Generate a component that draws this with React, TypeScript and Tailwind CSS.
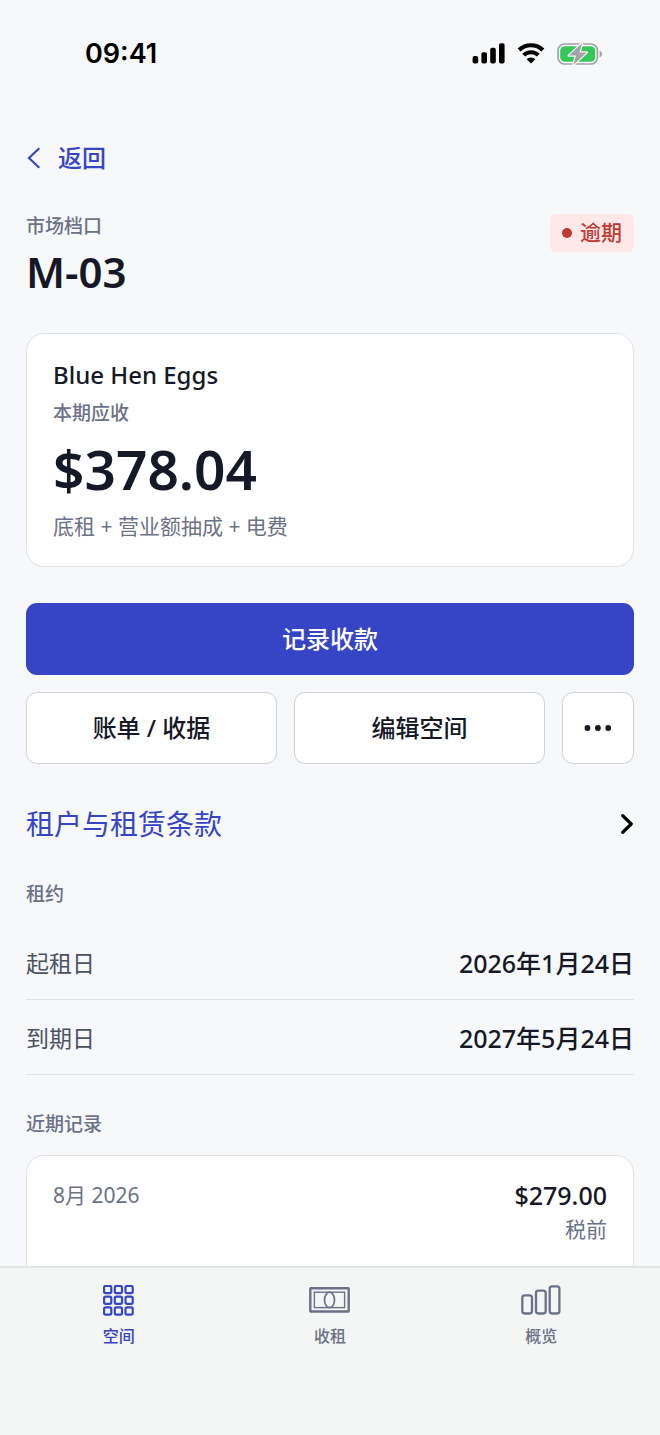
import type { ReactNode } from "react";

function SignalIcon() {
  return (
    <svg width="33" height="21" viewBox="0 0 33 21" fill="#000" aria-hidden="true">
      <rect x="0.6" y="13" width="5.6" height="7.5" rx="1.9" />
      <rect x="9.4" y="9.3" width="5.6" height="11.2" rx="1.9" />
      <rect x="18.2" y="4.8" width="5.6" height="15.7" rx="1.9" />
      <rect x="27" y="0.2" width="5.6" height="20.3" rx="1.9" />
    </svg>
  );
}

function WifiIcon() {
  return (
    <svg width="28" height="21" viewBox="0 0 28 21" fill="none" stroke="#000" aria-hidden="true">
      <path d="M2.1 7.1a17 17 0 0 1 23.8 0" strokeWidth="4.2" />
      <path d="M6.7 12.2a10.4 10.4 0 0 1 14.6 0" strokeWidth="4" />
      <path d="M14 20.5 9.7 16.3a6 6 0 0 1 8.6 0Z" fill="#000" stroke="none" />
    </svg>
  );
}

function BatteryIcon() {
  return (
    <svg width="46" height="22" viewBox="0 0 46 22" fill="none" aria-hidden="true">
      <rect x="1" y="1" width="39.4" height="20" rx="6.6" stroke="#a3a2a7" strokeWidth="1.7" />
      <rect x="3.2" y="3.2" width="35" height="15.6" rx="4.6" fill="#34c759" />
      <path d="M42.6 7.7c1.6.7 2.5 1.9 2.5 3.3s-.9 2.6-2.5 3.3Z" fill="#a3a2a7" />
      <path
        d="M25.2 0 11.8 12.6h7.2L16.2 22 29.8 9.4H22.5Z"
        fill="#a3a2a7"
        stroke="#f6f8fa"
        strokeWidth="2.4"
        strokeLinejoin="round"
        paintOrder="stroke"
      />
    </svg>
  );
}

function GridIcon() {
  const cells = [1, 11.7, 22.4];
  return (
    <svg width="31" height="31" viewBox="0 0 31 31" fill="none" stroke="currentColor" strokeWidth="2.2" aria-hidden="true">
      {cells.map((y) => cells.map((x) => <rect key={`${x}-${y}`} x={x + 0.1} y={y} width="7.2" height="7.2" rx="1.6" />))}
    </svg>
  );
}

function BanknoteIcon() {
  return (
    <svg width="41" height="26" viewBox="0 0 41 26" fill="none" stroke="currentColor" aria-hidden="true">
      <rect x="1.3" y="1.3" width="38.4" height="23.2" rx="0.5" strokeWidth="2.4" />
      <rect x="5.4" y="5.2" width="30.2" height="15.4" strokeWidth="1.4" />
      <ellipse cx="20.5" cy="12.9" rx="5" ry="7.7" strokeWidth="1.7" />
    </svg>
  );
}

function BarsIcon() {
  return (
    <svg width="40" height="30" viewBox="0 0 40 30" fill="none" stroke="currentColor" strokeWidth="2.3" aria-hidden="true">
      <rect x="1.3" y="10.3" width="9.7" height="18.2" rx="2.4" />
      <rect x="15" y="5.7" width="9.7" height="22.8" rx="2.4" />
      <rect x="28.7" y="1.3" width="9.7" height="27.2" rx="2.4" />
    </svg>
  );
}

function SectionLabel({ children }: { children: ReactNode }) {
  return <h2 className="text-[19px] leading-6 font-medium text-[#6b7187]">{children}</h2>;
}

function LeaseRow({ label, value }: { label: string; value: string }) {
  return (
    <div className="flex items-center justify-between border-b border-[#dfe2e6] pt-5 pb-[18px]">
      <dt className="text-[23px] leading-9 text-[#4b5262]">{label}</dt>
      <dd className="text-[25px] leading-9 font-medium text-[#141827]">{value}</dd>
    </div>
  );
}

function Tab({ label, icon, active = false }: { label: string; icon: ReactNode; active?: boolean }) {
  return (
    <a
      href="#"
      aria-current={active ? "page" : undefined}
      className={`flex flex-1 flex-col items-center gap-2 ${active ? "text-[#3545c6]" : "text-[#6b7187]"}`}
    >
      <span className="flex h-8 items-center">{icon}</span>
      <span className="text-[16px] leading-6 font-medium">{label}</span>
    </a>
  );
}

const outlineButton =
  "h-[72px] rounded-[11px] border border-[#cfd2d7] bg-white text-[24px] font-medium text-[#141827]";

export default function App() {
  return (
    <div
      lang="zh-CN"
      className="flex h-dvh flex-col bg-[#f6f8fa] font-['Noto_Sans','Noto_Sans_CJK_SC',sans-serif] text-[#141827]"
    >
      <header className="flex h-[107px] shrink-0 items-center justify-between pr-[57px] pl-[85px]">
        <time className="font-['Inter',sans-serif] text-[27px] leading-8 font-semibold text-black">09:41</time>
        <div className="flex items-center gap-3">
          <SignalIcon />
          <WifiIcon />
          <BatteryIcon />
        </div>
      </header>

      <main className="min-h-0 flex-1 overflow-y-auto px-[26px] pt-[33px] [scrollbar-width:none]">
        <a href="#" className="inline-flex items-center gap-4 text-[24px] leading-9 font-medium text-[#3545c6]">
          <svg width="16" height="22" viewBox="0 0 16 22" fill="none" stroke="currentColor" strokeWidth="2.2" aria-hidden="true">
            <path d="M13.3 1.2 3 11l10.3 9.8" />
          </svg>
          返回
        </a>

        <div className="mt-[38px] flex items-start justify-between">
          <div>
            <p className="text-[19px] leading-6 font-medium text-[#6b7187]">市场档口</p>
            <h1 className="mt-2 text-[42px] leading-[52px] font-semibold">M-03</h1>
          </div>
          <span className="flex h-[38px] items-center gap-2 rounded-md bg-[#fee9e8] px-3 text-[21px] font-medium text-[#bf3a31]">
            <span className="size-[10px] rounded-full bg-[#bf3a31]" />
            逾期
          </span>
        </div>

        <section className="mt-[35px] rounded-[18px] border border-[#dfe2e6] bg-white px-[26px] pt-[23px] pb-6">
          <h2 className="text-[24px] leading-9 font-medium">Blue Hen Eggs</h2>
          <p className="mt-2 text-[19px] leading-6 font-medium text-[#6b7187]">本期应收</p>
          <p className="mt-3 text-[55px] leading-[64px] font-semibold">$378.04</p>
          <p className="mt-[9px] text-[21px] leading-8 text-[#6b7187]">底租 + 营业额抽成 + 电费</p>
        </section>

        <button type="button" className="mt-9 block h-[72px] w-full rounded-[11px] bg-[#3545c6] text-[24px] font-medium text-white">
          记录收款
        </button>
        <div className="mt-[17px] flex gap-[17px]">
          <button type="button" className={`${outlineButton} flex-1`}>账单 / 收据</button>
          <button type="button" className={`${outlineButton} flex-1`}>编辑空间</button>
          <button type="button" aria-label="更多" className={`${outlineButton} flex w-[72px] items-center justify-center`}>
            <svg width="28" height="6" viewBox="0 0 28 6" fill="currentColor" aria-hidden="true">
              <circle cx="3.5" cy="3" r="2.9" />
              <circle cx="13.9" cy="3" r="2.9" />
              <circle cx="24.2" cy="3" r="2.9" />
            </svg>
          </button>
        </div>

        <a href="#" className="mt-10 flex items-center justify-between text-[28px] leading-10 text-[#3545c6]">
          租户与租赁条款
          <svg width="14" height="20" viewBox="0 0 14 20" fill="none" stroke="#000" strokeWidth="3.2" strokeLinecap="round" strokeLinejoin="round" aria-hidden="true">
            <path d="M2.7 1.7 11.2 10l-8.5 8.3" />
          </svg>
        </a>

        <section className="mt-[38px]">
          <SectionLabel>租约</SectionLabel>
          <dl className="mt-[19px]">
            <LeaseRow label="起租日" value="2026年1月24日" />
            <LeaseRow label="到期日" value="2027年5月24日" />
          </dl>
        </section>

        <section className="mt-[37px]">
          <SectionLabel>近期记录</SectionLabel>
          <div className="mt-[19px] flex items-start justify-between rounded-[18px] border border-[#dfe2e6] bg-white px-[26px] pt-[21px] pb-14">
            <p className="text-[21px] leading-9 text-[#6b7187]">8月 2026</p>
            <div className="text-right">
              <p className="text-[25px] leading-9 font-medium">$279.00</p>
              <p className="text-[21px] leading-8 text-[#6b7187]">税前</p>
            </div>
          </div>
        </section>
      </main>

      <nav className="flex h-[169px] shrink-0 items-start border-t-2 border-[#e3e6e8] bg-[#f4f5f5] px-[13px] pt-4">
        <Tab active label="空间" icon={<GridIcon />} />
        <Tab label="收租" icon={<BanknoteIcon />} />
        <Tab label="概览" icon={<BarsIcon />} />
      </nav>
    </div>
  );
}
